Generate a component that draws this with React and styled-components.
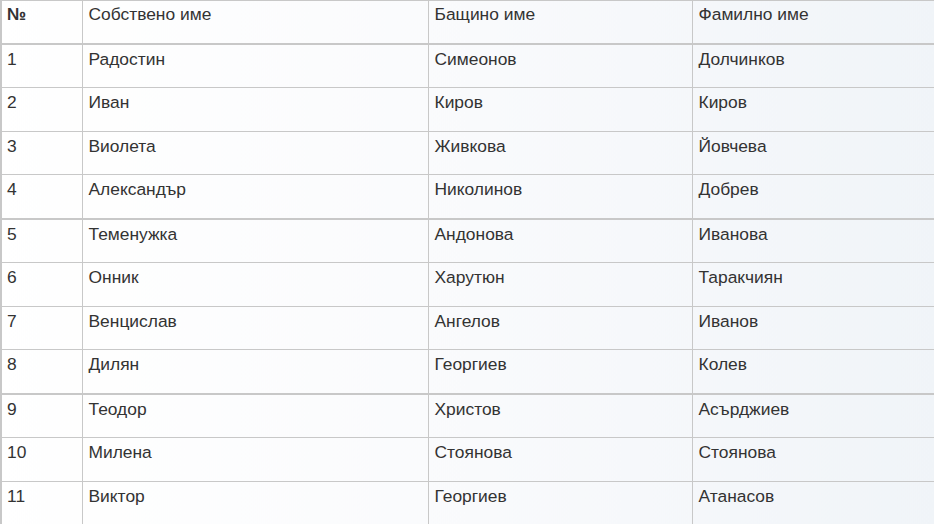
import React from "react";
import styled, { createGlobalStyle } from "styled-components";

const GlobalStyle = createGlobalStyle`
  html, body {
    margin: 0;
    padding: 0;
    background: #ffffff;
  }
  body {
    font-family: "Liberation Sans", Arial, sans-serif;
    color: #333333;
  }
`;

const Table = styled.table`
  width: 934px;
  border-collapse: collapse;
  table-layout: fixed;
  font-size: 17.4px;
  background: linear-gradient(to right, #ffffff 0%, #f9fafc 50%, #f0f4f8 100%);
  border-top: 1px solid #c8c8c8;
  border-left: 2px solid #c8c8c8;
`;

const Col = styled.col`
  width: ${props => props.w}px;
`;

const HeadCell = styled.th`
  height: 43px;
  padding: 3px 6px 0;
  padding-left: ${props => (props.first ? 5 : 6)}px;
  text-align: left;
  vertical-align: top;
  font-weight: ${props => (props.first ? 700 : 400)};
  color: #333333;
  border-right: 1px solid #c8c8c8;
  border-bottom: 2px solid #c8c8c8;
  box-sizing: border-box;
`;

const Group = styled.tbody`
  border-top: 2px solid #c8c8c8;
  &:first-of-type {
    border-top: none;
  }
`;

const Row = styled.tr`
  border-top: 1px solid #c8c8c8;
  &:first-child {
    border-top: none;
  }
`;

const Cell = styled.td`
  height: 43.75px;
  padding: 4px 6px 0;
  padding-left: ${props => (props.first ? 5 : 6)}px;
  vertical-align: top;
  color: #333333;
  border-right: 1px solid #c8c8c8;
  box-sizing: border-box;
`;

const people = [
  ["Радостин", "Симеонов", "Долчинков"],
  ["Иван", "Киров", "Киров"],
  ["Виолета", "Живкова", "Йовчева"],
  ["Александър", "Николинов", "Добрев"],
  ["Теменужка", "Андонова", "Иванова"],
  ["Онник", "Харутюн", "Таракчиян"],
  ["Венцислав", "Ангелов", "Иванов"],
  ["Дилян", "Георгиев", "Колев"],
  ["Теодор", "Христов", "Асърджиев"],
  ["Милена", "Стоянова", "Стоянова"],
  ["Виктор", "Георгиев", "Атанасов"],
];

const groups = [people.slice(0, 4), people.slice(4, 8), people.slice(8)];

const App = () => {
  return (
    <>
      <GlobalStyle />
      <Table>
        <colgroup>
          <Col w={81} />
          <Col w={346} />
          <Col w={264} />
          <Col w={243} />
        </colgroup>
        <thead>
          <tr>
            <HeadCell first>№</HeadCell>
            <HeadCell>Собствено име</HeadCell>
            <HeadCell>Бащино име</HeadCell>
            <HeadCell>Фамилно име</HeadCell>
          </tr>
        </thead>
        {groups.map((g, gi) => (
          <Group key={gi}>
            {g.map((p, k) => (
              <Row key={k}>
                <Cell first>{gi * 4 + k + 1}</Cell>
                <Cell>{p[0]}</Cell>
                <Cell>{p[1]}</Cell>
                <Cell>{p[2]}</Cell>
              </Row>
            ))}
          </Group>
        ))}
      </Table>
    </>
  );
};

export default App;
